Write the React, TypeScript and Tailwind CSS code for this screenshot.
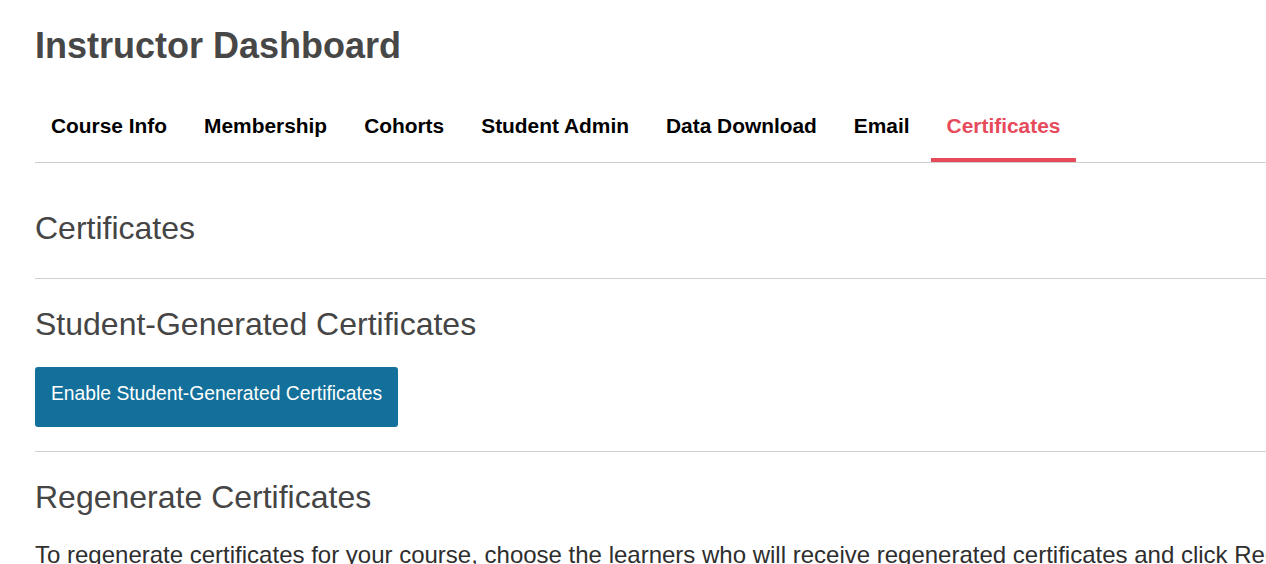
const tabs = [
  'Course Info',
  'Membership',
  'Cohorts',
  'Student Admin',
  'Data Download',
  'Email',
  'Certificates',
]

export default function App() {
  const active = 'Certificates'

  return (
    <main
      className="min-h-screen overflow-hidden bg-white pl-[35px]"
      style={{ fontFamily: '"Liberation Sans", Arial, sans-serif' }}
    >
      {/* PAGE TITLE */}
      <h1 className="pt-[26px] text-[36px] leading-[40px] font-bold text-[#474747]">
        Instructor Dashboard
      </h1>

      {/* TABS */}
      <nav className="mt-[29px] flex gap-[5px] border-b border-[#cfcfcf]">
        {tabs.map((tab) => (
          <button
            key={tab}
            className={
              tab === active
                ? 'border-b-4 border-[#e64b5c] px-4 pt-[17px] pb-[18px] text-[20.9px] leading-[28px] font-bold text-[#e64b5c]'
                : 'border-b-4 border-transparent px-4 pt-[17px] pb-[18px] text-[20.9px] leading-[28px] font-bold text-black'
            }
          >
            {tab}
          </button>
        ))}
      </nav>

      {/* CERTIFICATES SECTION */}
      <h2 className="mt-[47px] text-[32px] leading-[36px] text-[#454545]">
        Certificates
      </h2>
      <div className="mt-[32px] border-t border-[#d0d0d0]" />

      <h3 className="mt-[27px] text-[32px] leading-[36px] text-[#454545]">
        Student-Generated Certificates
      </h3>
      <button className="mt-[25px] h-[60px] rounded-[3px] bg-[#13709a] px-4 pb-[6px] text-[19.3px] text-white">
        Enable Student-Generated Certificates
      </button>
      <div className="mt-[24px] border-t border-[#d0d0d0]" />

      <h3 className="mt-[27px] text-[32px] leading-[36px] text-[#454545]">
        Regenerate Certificates
      </h3>
      <p className="mt-[26px] text-[24px] leading-[28px] whitespace-nowrap text-[#2e2e2e]">
        To regenerate certificates for your course, choose the learners who will
        receive regenerated certificates and click Regenerate Certificates.
      </p>
    </main>
  )
}
